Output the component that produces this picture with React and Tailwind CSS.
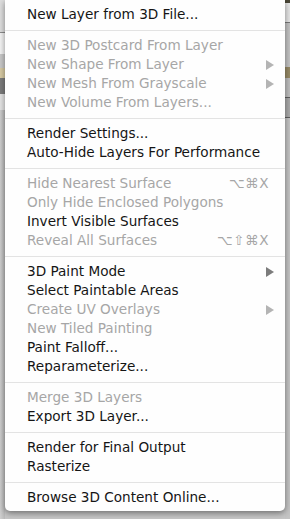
import React from "react";

const groups = [
  [{ label: "New Layer from 3D File..." }],
  [
    { label: "New 3D Postcard From Layer", off: true },
    { label: "New Shape From Layer", off: true, sub: true },
    { label: "New Mesh From Grayscale", off: true, sub: true },
    { label: "New Volume From Layers...", off: true },
  ],
  [{ label: "Render Settings..." }, { label: "Auto-Hide Layers For Performance" }],
  [
    { label: "Hide Nearest Surface", off: true, keys: "⌥⌘X" },
    { label: "Only Hide Enclosed Polygons", off: true },
    { label: "Invert Visible Surfaces" },
    { label: "Reveal All Surfaces", off: true, keys: "⌥⇧⌘X" },
  ],
  [
    { label: "3D Paint Mode", sub: true },
    { label: "Select Paintable Areas" },
    { label: "Create UV Overlays", off: true, sub: true },
    { label: "New Tiled Painting", off: true },
    { label: "Paint Falloff..." },
    { label: "Reparameterize..." },
  ],
  [{ label: "Merge 3D Layers", off: true }, { label: "Export 3D Layer..." }],
  [{ label: "Render for Final Output" }, { label: "Rasterize" }],
  [{ label: "Browse 3D Content Online..." }],
];

const Arrow = ({ off }) => (
  <svg width="8" height="10" viewBox="0 0 8 10" className="shrink-0">
    <path d="M0 0 L8 5 L0 10 Z" fill={off ? "#b4b4b4" : "#7c7c7c"} />
  </svg>
);

const Item = ({ item }) => (
  <div
    className={`h-[19px] flex items-center pl-[22px] pr-[11px] ${
      item.off ? "text-[#a6a6a6]" : "text-[#151515]"
    }`}
  >
    <div className="flex-1 whitespace-nowrap">{item.label}</div>
    {item.keys && <div className="whitespace-nowrap pr-[5px] tracking-[0.5px]">{item.keys}</div>}
    {item.sub && <Arrow off={item.off} />}
  </div>
);

export default function App() {
  return (
    <div className="w-[290px] h-[519px] overflow-hidden flex bg-[#c6c6c6] font-['DejaVu_Sans',sans-serif] text-[13.6px]">
      {/* left edge of the window behind */}
      <div className="w-[5px] shrink-0 flex flex-col">
        <div className="h-[33px] bg-[#dedede] border-b border-[#8d8d8d]" />
        <div className="h-[21px] bg-[#f4f4f4]" />
        <div className="h-[14px] bg-[#c9c9c9]" />
        <div className="h-[10px] bg-[#d8cba4]" />
        <div className="h-[16px] bg-[#7c7c7c]" />
        <div className="h-[16px] bg-[#e4e4e4]" />
        <div className="flex-1 bg-gradient-to-r from-[#cfcfcf] to-[#b9b9b9]" />
      </div>

      <div className="w-[280px] shrink-0 h-[511px] bg-[#fefefe] rounded-b-[5px] pt-[5px] shadow-[0_2px_6px_rgba(0,0,0,0.45)] relative">
        {groups.map((g, i) => (
          <div key={i}>
            {i > 0 && (
              <div className="h-[12px] flex items-center">
                <div className="h-px w-full bg-[#e3e3e3]" />
              </div>
            )}
            {g.map((item) => (
              <Item key={item.label} item={item} />
            ))}
          </div>
        ))}
      </div>

      {/* right edge of the window behind */}
      <div className="flex-1 flex flex-col">
        <div className="h-[3px] bg-[#4a4636]" />
        <div className="h-[20px] bg-[#e6e6e6] border-b border-[#7a7a7a]" />
        <div className="h-[44px] bg-[#c3c3c3]" />
        <div className="h-[11px] bg-[#978a66]" />
        <div className="h-[20px] bg-[#bdbdbd] border-b border-[#5e5e5e]" />
        <div className="h-[20px] bg-[#a9a9a9] border-b border-[#5e5e5e]" />
        <div className="flex-1 bg-[#c4c4c4]" />
      </div>
    </div>
  );
}
